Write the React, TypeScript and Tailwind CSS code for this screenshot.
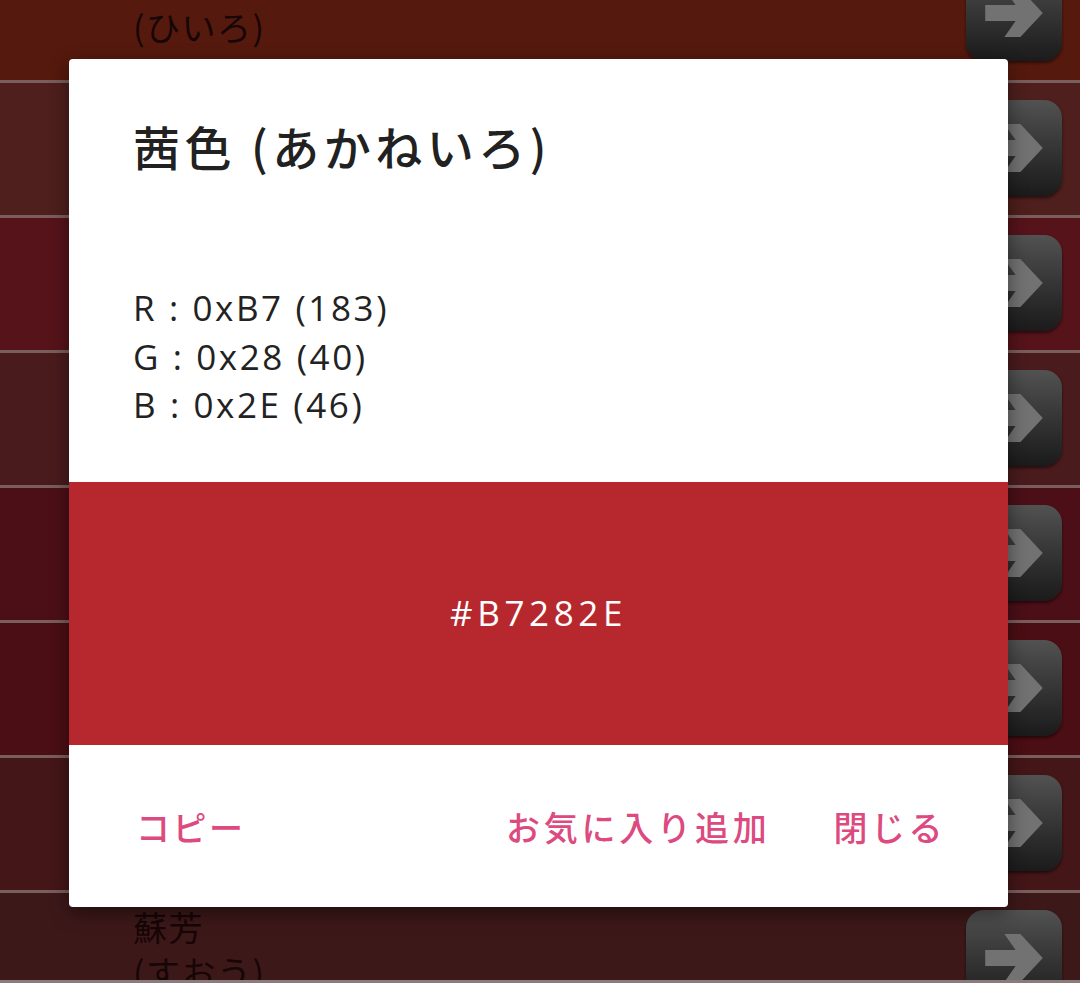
const rows = [
  { name: "緋色", reading: "(ひいろ)", bg: "bg-[#56190d]" },
  { name: "紅樺色", reading: "(べにかばいろ)", bg: "bg-[#4e1f1c]" },
  { name: "紅色", reading: "(べにいろ)", bg: "bg-[#56131a]" },
  { name: "臙脂", reading: "(えんじ)", bg: "bg-[#4a1b1d]" },
  { name: "韓紅", reading: "(からくれない)", bg: "bg-[#4c0f17]" },
  { name: "茜色", reading: "(あかねいろ)", bg: "bg-[#4b0e14]" },
  { name: "深緋", reading: "(こきひ)", bg: "bg-[#441618]" },
  { name: "蘇芳", reading: "(すおう)", bg: "bg-[#3d1819]" },
];

function ArrowButton() {
  return (
    <div className="w-[96px] h-[96px] rounded-[18px] bg-gradient-to-b from-[#525252] to-[#1b1b1b] flex items-center justify-center shadow-[0_2px_3px_rgba(0,0,0,0.5)]">
      <svg viewBox="0 0 100 100" className="w-[80px] h-[80px]">
        <polygon points="14,40 52,40 38,20 58,20 86,50 58,80 38,80 52,60 14,60" fill="#727272" />
      </svg>
    </div>
  );
}

function ColorRow({ name, reading, bg }: { name: string; reading: string; bg: string }) {
  return (
    <div className={`${bg} h-[135px] shrink-0 flex border-b-[3px] border-[#7a5e5e]`}>
      <div className="flex-1 pl-[133px] pt-[11px] text-[34px] leading-[45px] tracking-[1.5px] text-[#160606] font-['Noto_Sans_CJK_JP',sans-serif]">
        <div>{name}</div>
        <div>{reading}</div>
      </div>
      <div className="pr-[18px] pt-[17px]">
        <ArrowButton />
      </div>
    </div>
  );
}

export default function App() {
  return (
    <div className="relative w-[1080px] h-[983px] overflow-hidden bg-[#2a1212] flex flex-col">
      {/* color list behind the dialog */}
      <div className="flex-1 overflow-hidden">
        <div className="-mt-[52px] flex flex-col">
          {rows.map((r) => (
            <ColorRow key={r.name} {...r} />
          ))}
        </div>
      </div>
      <div className="h-[3px] bg-[#8a7c7c]" />

      {/* detail dialog */}
      <div className="absolute left-[69px] top-[59px] w-[939px] h-[848px] bg-white rounded-[4px] shadow-[0_6px_20px_rgba(0,0,0,0.45)] overflow-hidden flex flex-col">
        <div className="h-[423px] px-[64px] pt-[57px]">
          <h2 className="text-[47px] leading-[60px] tracking-[4.5px] font-medium text-[#212121] font-['Noto_Sans_CJK_JP',sans-serif]">
            茜色 (あかねいろ)
          </h2>
          <div className="mt-[108px] text-[35px] leading-[48.5px] tracking-[2.6px] text-[#222] font-['Open_Sans','Noto_Sans_CJK_JP',sans-serif]">
            <div>R : 0xB7 (183)</div>
            <div>G : 0x28 (40)</div>
            <div>B : 0x2E (46)</div>
          </div>
        </div>
        <div className="h-[263px] bg-[#b7282e] flex items-center justify-center text-white text-[35px] tracking-[4.6px] font-['Open_Sans',sans-serif]">
          #B7282E
        </div>
        <div className="flex-1 flex items-center pl-[67px] pr-[62px] text-[34px] font-medium text-[#dc4a80] font-['Noto_Sans_CJK_JP',sans-serif]">
          <button className="tracking-[2.5px]">コピー</button>
          <button className="ml-auto tracking-[3.8px]">お気に入り追加</button>
          <button className="ml-[63px] tracking-[3.5px]">閉じる</button>
        </div>
      </div>
    </div>
  );
}
